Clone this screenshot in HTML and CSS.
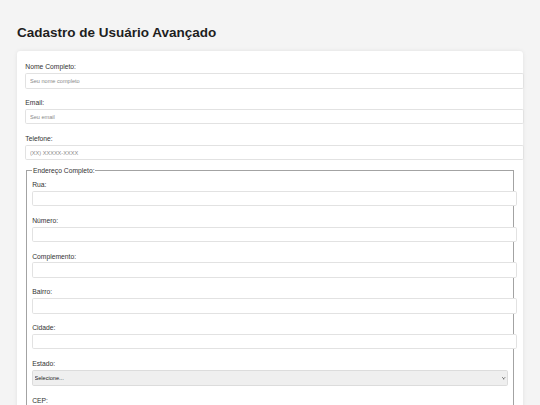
FILE: index.html
```html
<!DOCTYPE html>
<html lang="pt-BR">
<head>
<meta charset="utf-8">
<title>Cadastro de Usuário Avançado</title>
<link rel="stylesheet" href="styles.css">
</head>
<body>
<div class="page">
  <h1 class="title">Cadastro de Usuário Avançado</h1>
  <form class="card">
    <label class="label" for="nome">Nome Completo:</label>
    <input class="input" id="nome" type="text" placeholder="Seu nome completo">

    <label class="label" for="email">Email:</label>
    <input class="input" id="email" type="email" placeholder="Seu email">

    <label class="label" for="tel">Telefone:</label>
    <input class="input" id="tel" type="tel" placeholder="(XX) XXXXX-XXXX">

    <fieldset class="group">
      <legend class="legend">Endereço Completo:</legend>

      <label class="label" for="rua">Rua:</label>
      <input class="input" id="rua" type="text">

      <label class="label" for="numero">Número:</label>
      <input class="input" id="numero" type="text">

      <label class="label" for="comp">Complemento:</label>
      <input class="input" id="comp" type="text">

      <label class="label" for="bairro">Bairro:</label>
      <input class="input" id="bairro" type="text">

      <label class="label" for="cidade">Cidade:</label>
      <input class="input" id="cidade" type="text">

      <label class="label" for="estado">Estado:</label>
      <div class="select-wrap">
        <select class="select" id="estado">
          <option>Selecione...</option>
          <option>SP</option>
          <option>RJ</option>
          <option>MG</option>
        </select>
        <svg class="select-arrow" viewBox="0 0 8 6" width="3.4" height="2.6" aria-hidden="true">
          <path d="M0.5 0.5 L4 4 L7.5 0.5" fill="none" stroke="#2b2b2b" stroke-width="1.6"/>
          <path d="M3 4.6 L4 5.6 L5 4.6" fill="none" stroke="#2b2b2b" stroke-width="1"/>
        </svg>
      </div>

      <label class="label" for="cep">CEP:</label>
      <input class="input" id="cep" type="text">
    </fieldset>
  </form>
</div>
</body>
</html>
```
FILE: styles.css
```css
html, body {
  margin: 0;
  padding: 0;
}

body {
  background: #f4f4f4;
  font-family: "Liberation Sans", Arial, sans-serif;
  color: #333;
}

.page {
  padding: 0 16.9px;
}

.title {
  font-size: 13.5px;
  font-weight: bold;
  color: #1e1e1e;
  margin: 25.4px 0 0;
  padding-bottom: 9.8px;
  line-height: 15.5px;
}

.card {
  display: flex;
  flex-direction: column;
  background: #fff;
  padding: 8.44px;
  border-radius: 3.4px;
  box-shadow: 0 0 4px rgba(0, 0, 0, 0.08);
}

.label {
  display: block;
  font-size: 6.75px;
  line-height: 7.76px;
  margin: 4.22px 0 2.11px;
  color: #333;
}

.input {
  display: block;
  box-sizing: border-box;
  width: calc(100% + 9.3px);
  height: 15.4px;
  margin: 0 0 6.33px;
  padding: 0 3.64px;
  border: 1px solid #e2e2e2;
  border-radius: 1.7px;
  background: #fff;
  font-family: "Liberation Sans", Arial, sans-serif;
  font-size: 5.6px;
  color: #333;
  outline: none;
}

.input::placeholder {
  color: #8a8a8a;
}

.group {
  display: flex;
  flex-direction: column;
  margin: 0 0.84px;
  padding: 2.36px 5.06px 4.22px;
  border: 1px solid #a3a3a3;
}

.legend {
  padding: 0 0.84px;
  font-size: 6.75px;
  line-height: 7.76px;
  color: #333;
}

.select-wrap {
  position: relative;
  margin: 0 0 6.33px;
}

.select {
  display: block;
  box-sizing: border-box;
  width: 100%;
  height: 16.3px;
  margin: 0;
  padding: 0 1.3px;
  border: 1px solid #dcdcdc;
  border-radius: 1.7px;
  background-color: #efefef;
  font-family: "Liberation Sans", Arial, sans-serif;
  font-size: 5.6px;
  color: #222;
  appearance: none;
  -webkit-appearance: none;
  outline: none;
}

.select-arrow {
  position: absolute;
  right: 2.2px;
  top: 7.6px;
  pointer-events: none;
}
```
